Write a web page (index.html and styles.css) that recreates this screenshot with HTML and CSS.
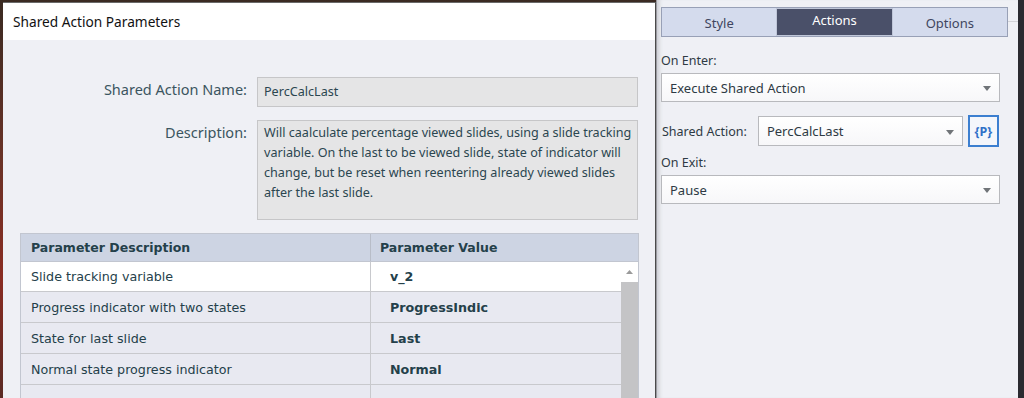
FILE: index.html
```html
<!DOCTYPE html>
<html>
<head>
<meta charset="utf-8">
<link rel="stylesheet" href="styles.css">
</head>
<body>
<div class="screen">
  <div class="backdrop">
    <div class="dialog">
      <div class="titlebar">Shared Action Parameters</div>
      <div class="dbody">
        <div class="field">
          <div class="flabel">Shared Action Name:</div>
          <div class="finput">PercCalcLast</div>
        </div>
        <div class="field">
          <div class="flabel">Description:</div>
          <div class="farea">Will caalculate percentage viewed slides, using a slide tracking variable. On the last to be viewed slide, state of indicator will change, but be reset when reentering already viewed slides after the last slide.</div>
        </div>
        <div class="table">
          <div class="thead">
            <div class="c1">Parameter Description</div>
            <div class="c2">Parameter Value</div>
          </div>
          <div class="tbody">
            <div class="rows">
              <div class="row sel"><div class="c1">Slide tracking variable</div><div class="c2 val">v_2</div></div>
              <div class="row"><div class="c1">Progress indicator with two states</div><div class="c2 val">ProgressIndic</div></div>
              <div class="row"><div class="c1">State for last slide</div><div class="c2 val">Last</div></div>
              <div class="row"><div class="c1">Normal state progress indicator</div><div class="c2 val">Normal</div></div>
              <div class="row"><div class="c1"></div><div class="c2 val"></div></div>
            </div>
            <div class="scroll">
              <div class="sbtn"><svg width="7" height="4" viewBox="0 0 7 4"><path d="M0 4 L3.5 0 L7 4 Z" fill="#9a9a9a"/></svg></div>
              <div class="strack"></div>
            </div>
          </div>
        </div>
      </div>
    </div>
  </div>
  <div class="panel">
    <div class="tabrow">
      <div class="tabs">
        <div class="tab">Style</div>
        <div class="tab active">Actions</div>
        <div class="tab">Options</div>
      </div>
      <div class="tabline"></div>
    </div>
    <div class="plabel first">On Enter:</div>
    <div class="select wide"><span>Execute Shared Action</span><i class="arr"></i></div>
    <div class="sarow">
      <div class="plabel inline">Shared Action:</div>
      <div class="select mid"><span>PercCalcLast</span><i class="arr"></i></div>
      <div class="pbtn">{P}</div>
    </div>
    <div class="plabel exit">On Exit:</div>
    <div class="select wide"><span>Pause</span><i class="arr"></i></div>
  </div>
  <div class="edge"></div>
</div>
</body>
</html>
```

FILE: styles.css
```css
html, body { margin: 0; padding: 0; }
body { width: 1024px; height: 398px; overflow: hidden; background: #efeff5; }
.screen { display: flex; width: 1024px; height: 398px; }

.backdrop {
  width: 656px; height: 398px; flex: none;
  background: linear-gradient(180deg, #3a2a22 0%, #6a3226 40%, #8a2c22 70%, #5a2a24 100%);
  padding: 2px 0 0 3px; box-sizing: border-box;
}
.dialog {
  width: 652px; height: 400px;
  background: #eff0f5;
  border-top: 1px solid #6a6a6a;
  border-right: 1px solid #4a4a4a;
  display: flex; flex-direction: column;
}
.titlebar {
  height: 37px; background: #ffffff; flex: none;
  font-family: "Noto Sans", "Open Sans", sans-serif; font-size: 13.7px; color: #111;
  padding-left: 10px; display: flex; align-items: center;
}
.dbody { padding: 37px 0 0 17px; display: flex; flex-direction: column; }
.field { display: flex; align-items: flex-start; margin-bottom: 13px; }
.flabel {
  width: 237px; text-align: right; padding-right: 10px; box-sizing: border-box;
  font-family: "Noto Sans", sans-serif; font-size: 14.5px; color: #3b5560;
  padding-top: 2px;
}
.finput, .farea {
  width: 381px; box-sizing: border-box;
  background: #e5e5e6; border: 1px solid #c6c6c8;
  font-family: "Noto Sans", sans-serif; font-size: 12.6px; color: #2b4650;
}
.finput { height: 30px; padding: 5px 6px; }
.farea { height: 100px; padding: 2px 0 2px 6px; line-height: 20px; }

.table {
  width: 617px; margin-top: 0;
  border: 1px solid #c2c6d0; border-bottom: none;
  font-family: "DejaVu Sans", Verdana, sans-serif; font-size: 12.7px; color: #24404a;
}
.thead {
  display: flex; height: 27px; background: #cdd4e3; border-bottom: 1px solid #c2c6d0;
  font-weight: bold; font-size: 12.5px;
}
.thead .c1 { width: 350px; padding-left: 10px; box-sizing: border-box; border-right: 1px solid #b8bdc8; display: flex; align-items: center; }
.thead .c2 { padding-left: 9px; display: flex; align-items: center; }
.tbody { display: flex; }
.rows { width: 600px; }
.row { display: flex; height: 30px; border-bottom: 1px solid #c8c9cd; background: #e8e9f1; }
.row.sel { background: #ffffff; height: 29px; }
.row .c1 { width: 350px; padding-left: 10px; box-sizing: border-box; border-right: 1px solid #c8c9cd; display: flex; align-items: center; }
.row .c2 { padding-left: 19px; display: flex; align-items: center; }
.val { font-weight: bold; }
.scroll { width: 17px; display: flex; flex-direction: column; background: #e8e9f1; }
.sbtn { height: 20px; background: #ffffff; display: flex; justify-content: center; align-items: center; }
.strack { flex: 1; background: #c4c4c6; }

.panel {
  width: 362px; flex: none; height: 398px; box-sizing: border-box;
  border-left: 1px solid #9a9aa0;
  background: #eff0f5;
  box-shadow: inset 5px 0 4px -3px #c9cad0;
  padding: 7px 0 0 4px;
  font-family: "Noto Sans", sans-serif; font-size: 12.5px; color: #2e3a44;
}
.tabrow { display: flex; align-items: center; }
.tabs {
  display: flex; width: 347px; height: 30px; box-sizing: border-box;
  border: 1px solid #98a0b6; background: #d4dbed;
}
.tab { flex: 1; display: flex; justify-content: center; align-items: center; font-size: 13px; color: #404660; padding-top: 1px; }
.tab.active { background: #4a5069; color: #ffffff; border: 1px solid #bfc6d8; align-items: flex-start; padding-top: 2px; }
.tabline { flex: 1; height: 1px; background: #d2d3d8; margin-top: -1px; }

.plabel { margin-bottom: 4px; font-size: 12.5px; color: #2e3a44; }
.plabel.first { margin-top: 15px; }
.plabel.exit { margin-top: 7px; }
.plabel.inline { margin: 0 11px 0 1px; }
.select {
  display: flex; align-items: center; justify-content: space-between;
  height: 29px; box-sizing: border-box; border: 1px solid #b8b9bd;
  background: linear-gradient(#ffffff, #f7f7f9);
  padding: 0 8px 0 8px; font-size: 13px; color: #2e3a44;
}
.select.wide { width: 339px; }
.select.mid { width: 205px; height: 30px; }
.arr { width: 0; height: 0; border-left: 4px solid transparent; border-right: 4px solid transparent; border-top: 5px solid #707478; margin-top: 2px; }
.sarow { display: flex; align-items: center; margin-top: 13px; }
.pbtn {
  margin-left: 5px; width: 31px; height: 32px; box-sizing: border-box;
  border: 2px solid #3c7fd0; background: #f4f6fb;
  color: #3070c8; font-size: 12.5px; font-weight: bold;
  display: flex; justify-content: center; align-items: center;
}
.edge { flex: 1; background: #2a2a30; }
```
